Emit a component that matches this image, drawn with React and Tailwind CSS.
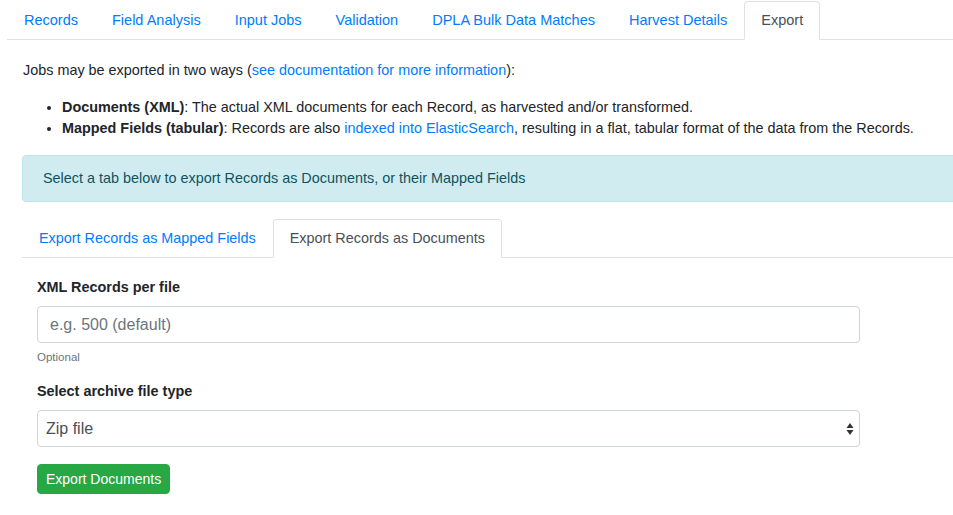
const topTabs = [
  "Records",
  "Field Analysis",
  "Input Jobs",
  "Validation",
  "DPLA Bulk Data Matches",
  "Harvest Details",
  "Export",
];

function Tab({ label, active }) {
  return (
    <li className="-mb-px">
      <a
        href="#"
        className={
          "block px-4 py-2 leading-[21px] border rounded-t " +
          (active
            ? "border-[#dee2e6] border-b-white bg-white text-[#495057]"
            : "border-transparent text-[#007bff]")
        }
      >
        {label}
      </a>
    </li>
  );
}

function SelectArrows() {
  return (
    <svg width="8" height="14" viewBox="0 0 8 14" className="absolute right-[5px] top-[11px]">
      <path d="M4 1 L7.5 6 L0.5 6 Z" fill="#333" />
      <path d="M4 13 L7.5 8 L0.5 8 Z" fill="#333" />
    </svg>
  );
}

export default function App() {
  return (
    <div
      className="min-h-screen w-full overflow-hidden bg-white text-[14.4px] leading-[21px] text-[#212529]"
      style={{ fontFamily: '"Liberation Sans", Arial, sans-serif' }}
    >
      <ul className="ml-[7px] mt-px flex border-b border-[#dee2e6] text-[14.5px]">
        {topTabs.map((t) => (
          <Tab key={t} label={t} active={t === "Export"} />
        ))}
      </ul>

      <div className="w-[1040px] pl-[22px] pt-[20px]">
        <p className="mb-[16px] pl-px">
          Jobs may be exported in two ways (
          <a href="#" className="text-[#007bff]">see documentation for more information</a>
          ):
        </p>
        <ul className="mb-[16px] list-disc pl-[40px]">
          <li>
            <b>Documents (XML)</b>: The actual XML documents for each Record, as harvested and/or transformed.
          </li>
          <li>
            <b>Mapped Fields (tabular)</b>: Records are also{" "}
            <a href="#" className="text-[#007bff]">indexed into ElasticSearch</a>, resulting in a flat, tabular
            format of the data from the Records.
          </li>
        </ul>

        <div className="mb-[17px] rounded border border-[#bee5eb] bg-[#d1ecf1] px-[20px] py-[12px] text-[#0c5460]">
          Select a tab below to export Records as Documents, or their Mapped Fields
        </div>

        <ul className="flex border-b border-[#dee2e6]">
          <Tab label="Export Records as Mapped Fields" />
          <Tab label="Export Records as Documents" active />
        </ul>

        <div className="px-[15px] pt-[19px]">
          <div className="mb-[15px]">
            <label className="mb-[8px] block font-bold">XML Records per file</label>
            <input
              type="text"
              placeholder="e.g. 500 (default)"
              className="block h-[37px] w-[823px] rounded border border-[#ced4da] px-[12px] text-[16px] text-[#495057] placeholder:text-[#6c757d] outline-none"
            />
            <div className="mt-[6px] text-[11.5px] leading-[17px] text-[#6c757d]">Optional</div>
          </div>

          <div className="mb-[17px]">
            <label className="mb-[8px] block font-bold">Select archive file type</label>
            <div className="relative h-[37px] w-[823px] rounded border border-[#ced4da] bg-white">
              <div className="pl-[8px] text-[16px] leading-[35px] text-[#495057]">Zip file</div>
              <SelectArrows />
            </div>
          </div>

          <button className="h-[30px] rounded border border-[#28a745] bg-[#28a745] px-[8px] text-[14px] leading-[20px] text-white">
            Export Documents
          </button>
        </div>
      </div>
    </div>
  );
}
